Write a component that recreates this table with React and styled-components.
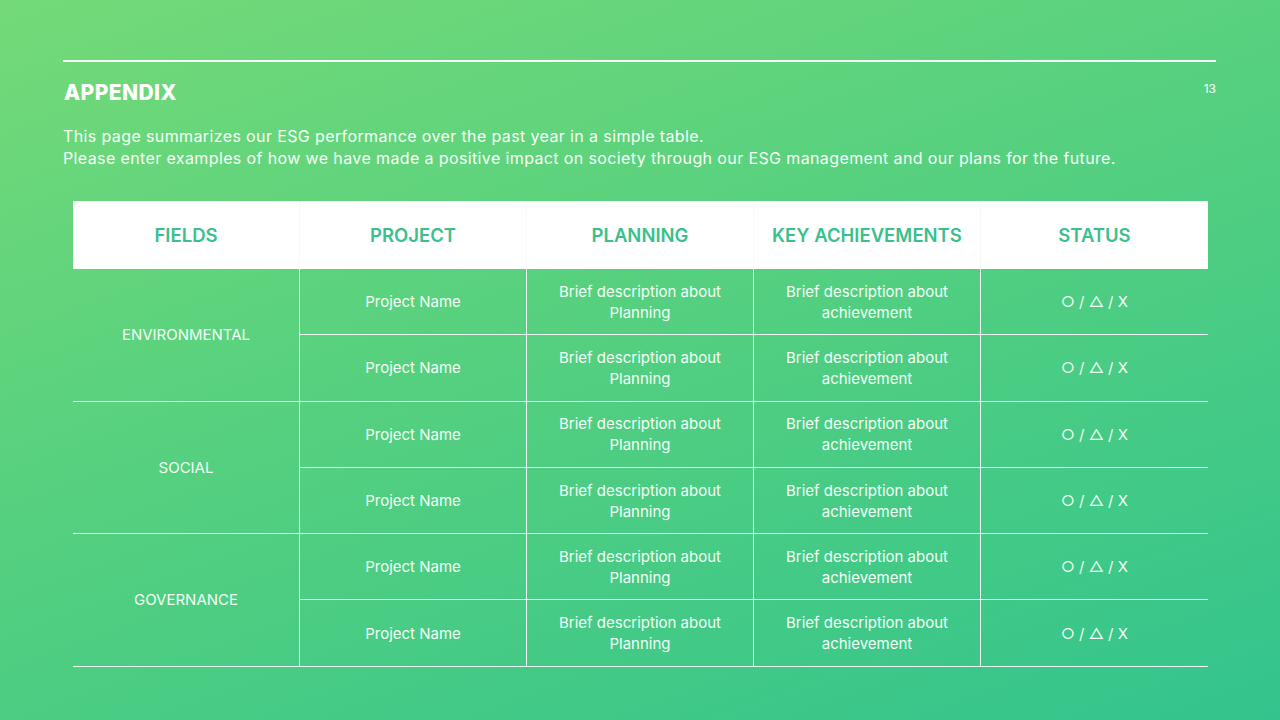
import React from "react";
import styled, { createGlobalStyle } from "styled-components";

const GlobalStyle = createGlobalStyle`
  html, body {
    margin: 0;
    padding: 0;
  }
  body {
    font-family: Inter, "Liberation Sans", sans-serif;
  }
`;

const groups = [
  { field: "ENVIRONMENTAL", rows: 2 },
  { field: "SOCIAL", rows: 2 },
  { field: "GOVERNANCE", rows: 2 },
];

const headers = ["FIELDS", "PROJECT", "PLANNING", "KEY ACHIEVEMENTS", "STATUS"];

function App() {
  return (
    <Page>
      <GlobalStyle />
      <Rule />
      <TitleRow>
        <Title>APPENDIX</Title>
        <PageNum>13</PageNum>
      </TitleRow>
      <Intro>
        This page summarizes our ESG performance over the past year in a simple table.
        <br />
        Please enter examples of how we have made a positive impact on society through our ESG management and our plans for the future.
      </Intro>
      <Table>
        {headers.map((h, i) => (
          <HeadCell key={h} $last={i === headers.length - 1}>
            {h}
          </HeadCell>
        ))}
        {groups.map((g) => (
          <React.Fragment key={g.field}>
            <FieldCell $span={g.rows}>{g.field}</FieldCell>
            {Array.from({ length: g.rows }).map((_, r) => (
              <React.Fragment key={r}>
                <Cell>Project Name</Cell>
                <Cell>
                  Brief description about
                  <br />
                  Planning
                </Cell>
                <Cell>
                  Brief description about
                  <br />
                  achievement
                </Cell>
                <Cell $last>○ / △ / X</Cell>
              </React.Fragment>
            ))}
          </React.Fragment>
        ))}
      </Table>
    </Page>
  );
}

const Page = styled.div`
  width: 1280px;
  height: 720px;
  box-sizing: border-box;
  padding: 60px 64px 0 63px;
  background: linear-gradient(160deg, #74da78 0%, #55d07f 45%, #33c48d 100%);
  color: #fff;
  overflow: hidden;
`;

const Rule = styled.div`
  height: 2px;
  background: #fff;
  opacity: 0.95;
`;

const TitleRow = styled.div`
  display: flex;
  justify-content: space-between;
  align-items: flex-start;
  margin-top: 18px;
`;

const Title = styled.h1`
  margin: 0 0 0 1px;
  font-family: Inter, "Open Sans", sans-serif;
  font-weight: 800;
  font-size: 21px;
  line-height: 25px;
  letter-spacing: 0.4px;
  color: #fff;
`;

const PageNum = styled.span`
  font-size: 12px;
  line-height: 16px;
  margin-top: 1px;
  color: #fff;
`;

const Intro = styled.p`
  margin: 20px 0 0 0;
  font-size: 16px;
  line-height: 22px;
  letter-spacing: 0.38px;
  color: #f6fff7;
`;

const Table = styled.div`
  margin: 32px 8px 0 10px;
  display: grid;
  grid-template-columns: repeat(5, 1fr);
  grid-auto-rows: 66.3px;
  grid-template-rows: 68px;
`;

const HeadCell = styled.div`
  background: #fff;
  display: flex;
  align-items: center;
  justify-content: center;
  font-size: 18.5px;
  font-weight: 600;
  color: #3bbf8c;
  border-right: ${(p) => (p.$last ? "none" : "1px solid #f7f9f8")};
`;

const Cell = styled.div`
  display: flex;
  align-items: center;
  justify-content: center;
  text-align: center;
  font-size: 15px;
  line-height: 21px;
  color: #f3fff6;
  border-bottom: 1.5px solid rgba(255, 255, 255, 0.9);
  border-right: ${(p) => (p.$last ? "none" : "1.5px solid rgba(255, 255, 255, 0.9)")};
`;

const FieldCell = styled(Cell)`
  grid-row: span ${(p) => p.$span};
`;

export default App;
